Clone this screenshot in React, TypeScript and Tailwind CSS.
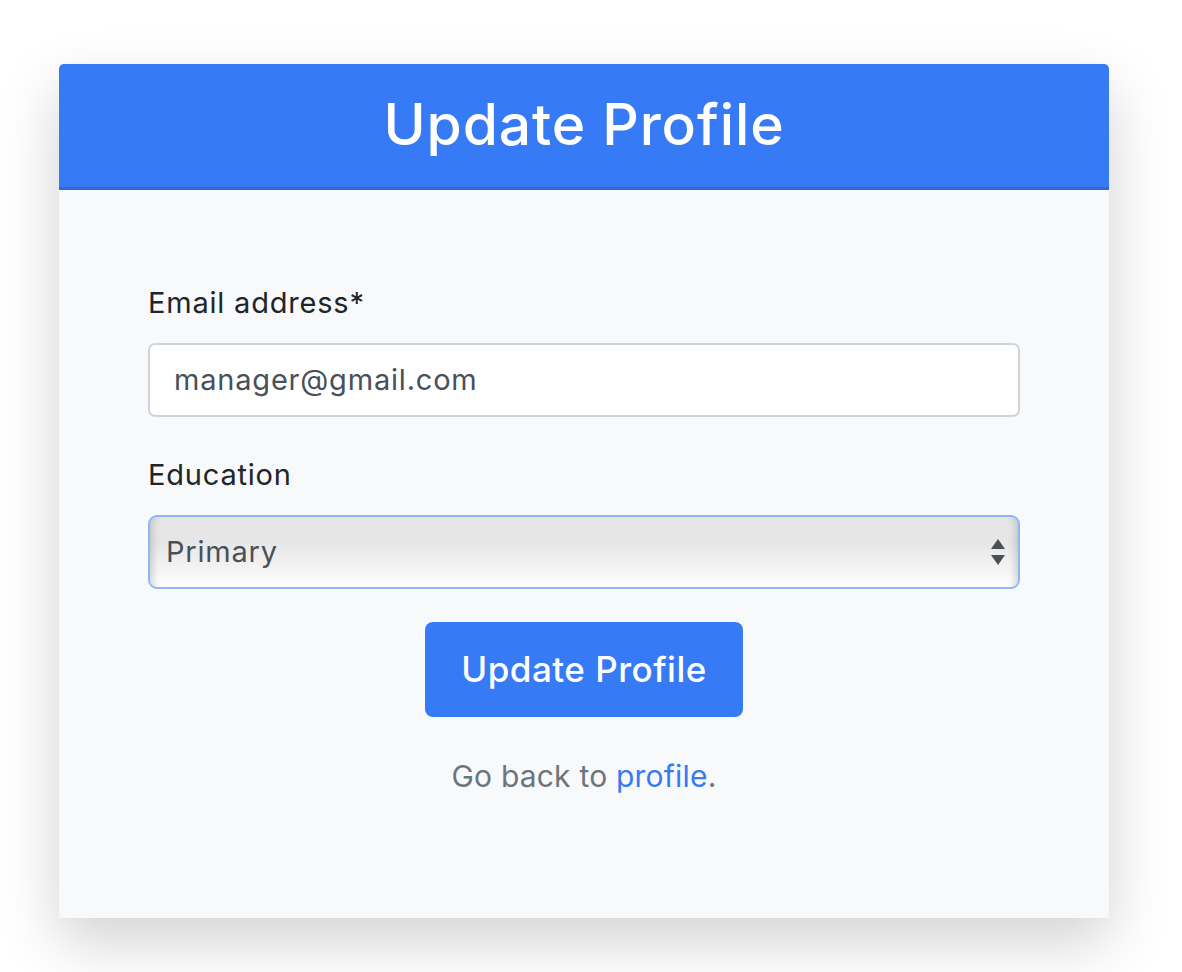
import React from "react";

export default function App() {
  return (
    <div
      className="min-h-[972px] w-full bg-white pt-[64px] pl-[59px]"
      style={{ fontFamily: "Inter, 'Noto Sans', sans-serif" }}
    >
      <div className="w-[1050px] h-[854px] bg-[#f8f9fa] rounded-t-[5px] shadow-[0_24px_60px_rgba(0,0,0,0.18)] flex flex-col">
        <div className="h-[126px] bg-[#367af6] border-b-[3px] border-[#2f6bd8] rounded-t-[5px] flex items-center justify-center">
          <h1 className="text-white text-[57px] leading-none font-medium tracking-[0.9px] pb-[2px]">
            Update Profile
          </h1>
        </div>
        <div className="px-[89px] pt-[92px] flex flex-col">
          <label className="text-[#212529] text-[29px] leading-[42px] tracking-[0.8px]">Email address*</label>
          <div className="mt-[19px] h-[74px] bg-white border-2 border-[#ced4da] rounded-[7px] flex items-center px-[24px]">
            <span className="text-[#495057] text-[29px] tracking-[0.8px]">manager@gmail.com</span>
          </div>
          <label className="mt-[37px] text-[#212529] text-[29px] leading-[42px] tracking-[0.8px]">Education</label>
          <div className="mt-[19px] relative h-[74px] border-2 border-[#8ab8f8] rounded-[9px] bg-[linear-gradient(to_bottom,#e7e7e7_0%,#e6e6e6_35%,#f2f2f2_70%,#ffffff_100%)] shadow-[inset_10px_0_8px_-8px_rgba(0,0,0,0.18),inset_-10px_0_8px_-8px_rgba(0,0,0,0.18)] flex items-center pl-[16px]">
            <span className="text-[#495057] text-[29px] tracking-[0.8px]">Primary</span>
            <svg
              className="absolute right-[12px] top-[20px]"
              width="16"
              height="30"
              viewBox="0 0 16 30"
            >
              <polygon points="8,2 15,12 1,12" fill="#495057" />
              <polygon points="1,18 15,18 8,28" fill="#495057" />
            </svg>
          </div>
          <div className="mt-[33px] flex justify-center">
            <button className="w-[318px] h-[95px] bg-[#367af6] rounded-[8px] text-white text-[35px] font-medium tracking-[0.5px]">
              Update Profile
            </button>
          </div>
          <p className="mt-[38px] text-center text-[#6c757d] text-[30px] leading-[42px] tracking-[0.2px]">
            Go back to <a className="text-[#367af6]">profile</a>.
          </p>
        </div>
      </div>
    </div>
  );
}
